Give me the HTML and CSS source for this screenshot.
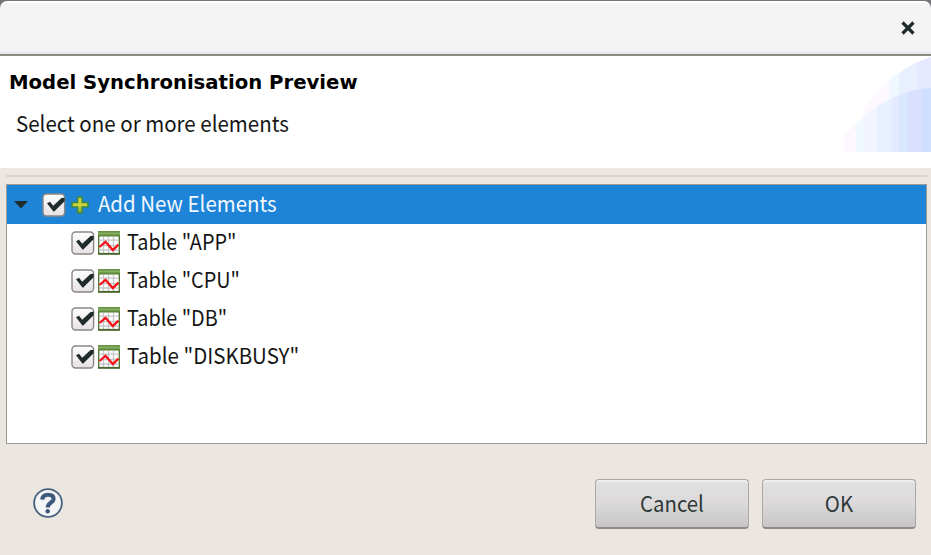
FILE: index.html
```html
<!DOCTYPE html>
<html lang="en">
<head>
<meta charset="utf-8">
<title>Model Synchronisation Preview</title>
<link rel="stylesheet" href="styles.css">
</head>
<body>
<svg class="symbols" aria-hidden="true">
  <defs>
    <linearGradient id="boxfill" x2="0" y2="1"><stop offset="0" stop-color="#fff"/><stop offset="1" stop-color="#e5e1e5"/></linearGradient>
    <linearGradient id="greenbar" x2="0" y2="1"><stop offset="0" stop-color="#5f8a3b"/><stop offset=".45" stop-color="#86ae60"/><stop offset="1" stop-color="#4c7927"/></linearGradient>
    <linearGradient id="plusfill" x2="0" y2="1"><stop offset="0" stop-color="#b3cc42"/><stop offset=".5" stop-color="#d0d437"/><stop offset="1" stop-color="#78ad3c"/></linearGradient>
    <symbol id="check" viewBox="0 0 24 24">
      <rect x="1" y="1" width="21.6" height="22" rx="3.5" fill="url(#boxfill)" stroke="#8c8782" stroke-width="1.4"/>
      <path d="M5 10.2 8 8.8 11.2 12.7 19.5 5 22.6 4.7V8.2L12.3 18.5H11.4Z" fill="#202b2b"/>
    </symbol>
    <symbol id="table" viewBox="0 0 22 24">
      <rect x=".7" y=".7" width="20.6" height="22.3" fill="#fff" stroke="#557536" stroke-width="1.4"/>
      <path d="M5.5 6V22M10.5 6V22M15.5 6V22M1.5 9.2H20.5M1.5 14.5H20.5M1.5 19H20.5" stroke="#c5c5c5" stroke-width="1.3"/>
      <rect width="22" height="5.5" fill="url(#greenbar)"/>
      <path d="M0 22.7H22" stroke="#48652e" stroke-width="1.6"/>
      <path d="M1.5 16 7.5 10.8 14.8 19 20.5 13.6" fill="none" stroke="#f50f17" stroke-width="2.3"/>
    </symbol>
  </defs>
</svg>
<main class="dialog">
  <div class="backdrop"><header class="titlebar">
    <svg class="close" viewBox="0 0 14 14"><path d="M1.5 1.5 12.5 12.5M12.5 1.5 1.5 12.5" stroke="#202b2b" stroke-width="3.2"/></svg>
  </header></div>
  <section class="banner">
    <div class="banner-text">
      <h1>Model Synchronisation Preview</h1>
      <p>Select one or more elements</p>
    </div>
    <svg class="art" viewBox="0 0 88 97" preserveAspectRatio="none">
      <defs>
        <clipPath id="outer"><path d="M0 97C13 54 43 16 88 1V97Z"/></clipPath>
        <clipPath id="inner"><path d="M0 81C25 55 50 35 88 32V97H0Z"/></clipPath>
      </defs>
      <g clip-path="url(#outer)">
        <path d="M20 0H46V97H20Z" fill="#fdf8ff"/><path d="M46 0H56V97H46Z" fill="#f0f8ff"/>
        <path d="M56 0H74V97H56Z" fill="#e8f0ff"/><path d="M74 0H88V97H74Z" fill="#e6e9ff"/>
      </g>
      <g clip-path="url(#inner)">
        <path d="M1 0H13V97H1Z" fill="#fdf8ff"/><path d="M13 0H21V97H13Z" fill="#eff9ff"/>
        <path d="M21 0H34V97H21Z" fill="#f2f5ff"/><path d="M34 0H49V97H34Z" fill="#e7f0ff"/>
        <path d="M49 0H56V97H49Z" fill="#e4e9ff"/><path d="M56 0H64V97H56Z" fill="#d8e9ff"/>
        <path d="M64 0H79V97H64Z" fill="#dae1ff"/><path d="M79 0H88V97H79Z" fill="#cfdfff"/>
      </g>
    </svg>
  </section>
  <div class="separator"></div>
  <section class="tree">
    <div class="row selected">
      <svg class="arrow" viewBox="0 0 14 8"><path d="M0 0H14L7 7.5Z" fill="#202b2b"/></svg>
      <svg class="check"><use href="#check"/></svg>
      <svg class="plus" viewBox="0 0 18 18"><path d="M6.5 1H11.2V6.6H17V11H11.2V17H6.5V11H1V6.6H6.5Z" fill="url(#plusfill)" stroke="#3b8748" stroke-width="1.5"/></svg>
      <span class="label">Add New Elements</span>
    </div>
    <div class="row child"><svg class="check"><use href="#check"/></svg><svg class="table"><use href="#table"/></svg><span class="label short">Table "APP"</span></div>
    <div class="row child"><svg class="check"><use href="#check"/></svg><svg class="table"><use href="#table"/></svg><span class="label short">Table "CPU"</span></div>
    <div class="row child"><svg class="check"><use href="#check"/></svg><svg class="table"><use href="#table"/></svg><span class="label short">Table "DB"</span></div>
    <div class="row child"><svg class="check"><use href="#check"/></svg><svg class="table"><use href="#table"/></svg><span class="label">Table "DISKBUSY"</span></div>
  </section>
  <footer class="footer">
    <svg class="help" viewBox="0 0 30 30">
      <circle cx="15" cy="15" r="13.9" fill="#f5f4f7" stroke="#49627f" stroke-width="1.8"/>
      <path d="M9.4 11.6C9.5 8.2 11.8 6.8 15 6.8 18.5 6.8 20.6 8.4 20.6 11 20.6 14.8 14.8 14.4 14.8 19.4" fill="none" stroke="#3e5a7b" stroke-width="4.1"/>
      <circle cx="14.7" cy="23.3" r="2.2" fill="#3e5a7b"/>
    </svg>
    <div class="actions"><button><span>Cancel</span></button><button><span>OK</span></button></div>
  </footer>
</main>
</body>
</html>
```
FILE: styles.css
```css
* { box-sizing: border-box; }
body {
  margin: 0;
  background: #ebe6e0;
  font-family: "Noto Sans CJK SC", "Noto Sans", sans-serif;
  font-size: 22px;
  color: #151515;
}
svg { display: block; flex: none; }
.symbols { position: absolute; width: 0; height: 0; }
.dialog {
  width: 931px;
  height: 555px;
  overflow: hidden;
  display: flex;
  flex-direction: column;
}
.backdrop { height: 56px; padding-top: 1px; background: #77747a; flex: none; }
.titlebar {
  height: 55px;
  display: flex;
  justify-content: flex-end;
  padding: 20px 16px 0 0;
  background: linear-gradient(#fff 0 2px, #f4f4f4 2px 49px, #e8e4ec 52px);
  border-bottom: 2px solid #8c8882;
  border-radius: 7px 7px 0 0;
}
.close { width: 14px; height: 14px; }
.banner {
  height: 112px;
  flex: none;
  display: flex;
  justify-content: space-between;
  background: #fff;
}
h1 {
  margin: 13px 0 0 9px;
  font: bold 20px/26px "DejaVu Sans", sans-serif;
  color: #000;
  white-space: nowrap;
  transform: scaleX(.983);
  transform-origin: left;
}
.banner p {
  margin: 11px 0 0 16px;
  line-height: 32px;
  white-space: nowrap;
  transform: scaleX(.932);
  transform-origin: left;
}
.art { width: 88px; height: 96px; }
.separator {
  height: 2px;
  flex: none;
  margin: 7px 4px 7px 6px;
  background: #d8d3d0;
}
.tree {
  height: 260px;
  flex: none;
  margin: 0 4px 0 6px;
  border: 1px solid #9f9b97;
  background: #fff;
}
.row { height: 38px; display: flex; align-items: center; }
.selected { height: 39px; background: #1e84d8; color: #f2f8fd; padding-left: 7px; }
.arrow { width: 14px; height: 8px; margin-right: 14px; }
.check { width: 24px; height: 24px; }
.plus { width: 18px; height: 18px; margin: 0 8px 0 5px; }
.selected .label { padding-left: 1px; }
.child { padding-left: 64px; }
.table { width: 22px; height: 24px; margin: 0 7px 0 3px; }
.label {
  line-height: 32px;
  margin-bottom: 6px;
  white-space: pre;
  transform: scaleX(.93);
  transform-origin: left;
}
.short { transform: scaleX(.9); }
.footer {
  flex: 1;
  display: flex;
  justify-content: space-between;
  padding: 35px 15px 0 33px;
}
.help { width: 30px; height: 30px; margin-top: 9px; }
.actions { display: flex; gap: 13px; }
button {
  width: 154px;
  height: 50px;
  padding: 0;
  border: 1px solid #aaa7a5;
  border-bottom: 2px solid #8d898a;
  border-radius: 4px;
  background: linear-gradient(#dfe1df, #dedadd 45%, #d4d4d1 65%, #c9c5c8);
  box-shadow: inset 0 2px 0 #f0efef;
  font: inherit;
  line-height: 43px;
  color: #2d3939;
}
button span { display: block; padding-bottom: 2px; transform: scaleX(.925); }
```
